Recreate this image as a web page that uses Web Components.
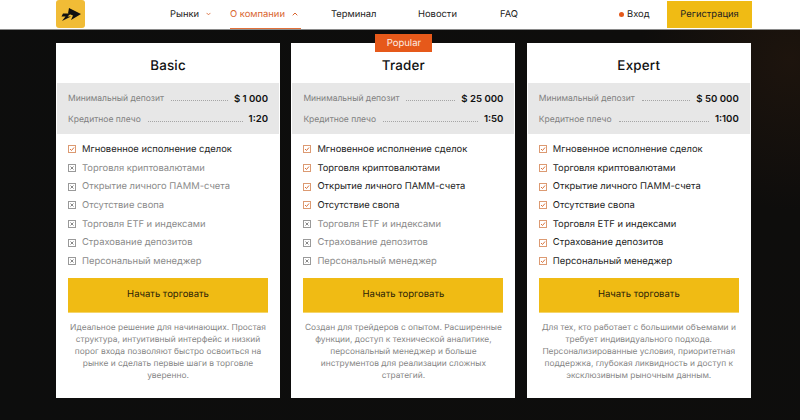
<!DOCTYPE html>
<html lang="ru">
<head>
<meta charset="utf-8">
<title>Тарифы</title>
<style>
  html, body { margin: 0; height: 420px; overflow: hidden; }
  body {
    background: radial-gradient(circle at 790px 60px, #1d140d 0, #0e0d0c 150px, #0d0d0d 100%);
    font-family: Inter, "Noto Sans", sans-serif;
    text-rendering: geometricPrecision;
  }
  .plans { display: flex; gap: 11.4px; padding: 13px 0 0 56px; }
</style>
</head>
<body>
<site-header></site-header>
<div class="plans">
  <plan-card name="Basic" deposit="$ 1 000" leverage="1:20" on="1"
    text="Идеальное решение для начинающих. Простая структура, интуитивный интерфейс и низкий порог входа позволяют быстро освоиться на рынке и сделать первые шаги в торговле уверенно."></plan-card>
  <plan-card name="Trader" deposit="$ 25 000" leverage="1:50" on="4" popular
    text="Создан для трейдеров с опытом. Расширенные функции, доступ к технической аналитике, персональный менеджер и больше инструментов для реализации сложных стратегий."></plan-card>
  <plan-card name="Expert" deposit="$ 50 000" leverage="1:100" on="7"
    text="Для тех, кто работает с большими объемами и требует индивидуального подхода. Персонализированные условия, приоритетная поддержка, глубокая ликвидность и доступ к эксклюзивным рыночным данным."></plan-card>
</div>

<script>
class SiteHeader extends HTMLElement {
  constructor() {
    super();
    this.attachShadow({ mode: 'open' });
    this.shadowRoot.innerHTML = `
      <style>
        :host { display: flex; align-items: stretch; height: 29px; background: #fff; border-bottom: 1px solid #8a8a8a; font-size: 9.4px; color: #222; white-space: nowrap; }
        .logo { margin-left: 56px; width: 29px; height: 28px; flex: none; }
        nav { display: flex; margin-left: 85px; }
        nav a { display: flex; align-items: center; height: 29px; box-sizing: border-box; padding-bottom: 1px; }
        .arrow { margin-left: 7px; }
        .markets { width: 60px; }
        .about { width: 71px; color: #d9652f; border-bottom: 1px solid #e0703a; padding-bottom: 0; margin-right: 30px; }
        .terminal { width: 87px; }
        .news { width: 82px; }
        .right { display: flex; align-items: center; margin-left: 101px; }
        .login { display: flex; align-items: center; width: 48px; height: 28px; }
        .dot { width: 5px; height: 5px; border-radius: 50%; background: #e4591a; margin-right: 3px; }
        .reg { width: 85px; height: 27px; margin-bottom: 1px; background: #f0bb14; display: flex; align-items: center; justify-content: center; }
      </style>
      <svg class="logo" viewBox="0 0 29 28">
        <path d="M3 0H26Q29 0 29 3V25Q29 28 26 28H3Q0 28 0 25V3Q0 0 3 0Z" fill="#f1bc36"/>
        <path d="M13 8L25 14L15 20L17 15.5L12 13.5Z" fill="#111"/>
        <path d="M7 13.5H15L11.5 16.5H15L6 21L9.5 16.5H5.5Z" fill="#111"/>
      </svg>
      <nav>
        <a class="markets">Рынки<svg class="arrow" width="5" height="4" viewBox="0 0 6 4"><path d="M.7.7L3 3L5.3.7" fill="none" stroke="#d9652f"/></svg></a>
        <a class="about">О компании<svg class="arrow" width="6" height="4" viewBox="0 0 6 4"><path d="M.7 3.3L3 1L5.3 3.3" fill="none" stroke="#d9652f"/></svg></a>
        <a class="terminal">Терминал</a>
        <a class="news">Новости</a>
        <a>FAQ</a>
      </nav>
      <div class="right">
        <a class="login"><span class="dot"></span>Вход</a>
        <a class="reg">Регистрация</a>
      </div>`;
  }
}
customElements.define('site-header', SiteHeader);

const FEATURES = ['Мгновенное исполнение сделок', 'Торговля криптовалютами', 'Открытие личного ПАММ-счета', 'Отсутствие свопа', 'Торговля ETF и индексами', 'Страхование депозитов', 'Персональный менеджер'];

const CHECK_ON = `<svg width="8" height="8" viewBox="0 0 8 8"><rect x=".5" y=".5" width="7" height="7" fill="none" stroke="#dc9a72"/><path d="M2 4L3.5 5.5L6 2.5" fill="none" stroke="#d9733c"/></svg>`;
const CHECK_OFF = `<svg width="8" height="8" viewBox="0 0 8 8"><rect x=".5" y=".5" width="7" height="7" fill="none" stroke="#999"/><path d="M2.5 2.5L5.5 5.5M5.5 2.5L2.5 5.5" fill="none" stroke="#888"/></svg>`;

class PlanCard extends HTMLElement {
  connectedCallback() {
    const on = +this.getAttribute('on');
    const rows = FEATURES.map((f, i) => `<li class="${i < on ? 'on' : ''}">${i < on ? CHECK_ON : CHECK_OFF}<span>${f}</span></li>`).join('');
    this.attachShadow({ mode: 'open' }).innerHTML = `
      <style>
        :host { display: block; position: relative; width: 224px; height: 355px; background: #fff; box-sizing: border-box; padding: 0 1px; color: #111; }
        .badge { position: absolute; left: 84px; top: -9px; width: 57px; height: 18px; background: #e6591a; color: #fdeee4; font-size: 9.5px; display: flex; align-items: center; justify-content: center; }
        h2 { margin: 0; height: 40px; display: flex; align-items: center; justify-content: center; font-size: 13.4px; font-weight: 500; letter-spacing: .2px; padding-top: 6px; box-sizing: border-box; }
        .terms { background: #e7e7e7; height: 51px; padding: 6px 11px 0; box-sizing: border-box; }
        .term { display: flex; align-items: center; height: 20.5px; font-size: 8.5px; color: #808080; }
        .term i { flex: 1; border-bottom: 1px dotted #a5a5a5; margin: 3px 6px 0 7px; }
        .term b { color: #111; font-size: 9.6px; font-weight: 600; }
        ul { list-style: none; margin: 6px 0 0; padding: 0 0 0 11px; }
        li { display: flex; align-items: center; height: 18.7px; font-size: 9.4px; color: #8a8a8a; }
        li.on { color: #222; }
        li svg { margin-right: 6px; }
        .go { display: flex; align-items: center; justify-content: center; height: 35px; margin: 7px 11px 0; background: #f0bb14; border-bottom: 1px solid #f5d56a; box-sizing: border-box; font-size: 9.5px; color: #2a2208; }
        p { margin: 9px 11px 0; font-size: 8.4px; line-height: 12px; text-align: center; color: #858585; }
      </style>
      ${this.hasAttribute('popular') ? '<div class="badge">Popular</div>' : ''}
      <h2>${this.getAttribute('name')}</h2>
      <div class="terms">
        <div class="term"><span>Минимальный депозит</span><i></i><b>${this.getAttribute('deposit')}</b></div>
        <div class="term"><span>Кредитное плечо</span><i></i><b>${this.getAttribute('leverage')}</b></div>
      </div>
      <ul>${rows}</ul>
      <a class="go">Начать торговать</a>
      <p>${this.getAttribute('text')}</p>`;
  }
}
customElements.define('plan-card', PlanCard);
</script>
</body>
</html>
